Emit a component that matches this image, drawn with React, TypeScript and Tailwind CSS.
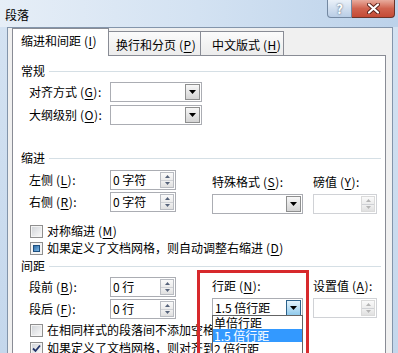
import React from "react";

const Key = ({ k }: { k: string }) => (
  <span className="ml-[3px] tracking-[0.5px]">
    (<span className="underline underline-offset-[2px]">{k}</span>)
  </span>
);

function Tri() {
  return (
    <svg width="7" height="4" viewBox="0 0 7 4">
      <path d="M0 0H7L3.5 4Z" fill="currentColor" />
    </svg>
  );
}

function Combo({ value = "", w, pressed = false }: { value?: string; w: string; pressed?: boolean }) {
  return (
    <div className={`${w} h-[20px] border border-[#abadb3] bg-white flex items-stretch shrink-0`}>
      <div className="flex-1 flex items-center pl-[2px] overflow-hidden whitespace-nowrap">{value}</div>
      <div
        className={
          pressed
            ? "w-[15px] m-px border border-[#2c628b] bg-gradient-to-b from-[#e5f4fc] to-[#8fcaec] flex items-center justify-center text-black"
            : "w-[15px] m-px border border-[#8e8f8f] bg-gradient-to-b from-[#f7f7f7] to-[#d4d4d4] flex items-center justify-center text-black"
        }
      >
        <Tri />
      </div>
    </div>
  );
}

function Spin({ value = "", w, disabled = false }: { value?: string; w: string; disabled?: boolean }) {
  return (
    <div
      className={`${w} h-[20px] border ${disabled ? "border-[#d0d2d6]" : "border-[#abadb3]"} bg-white flex items-stretch shrink-0`}
    >
      <div className="flex-1 flex items-center pl-[2px] whitespace-nowrap">{value}</div>
      <div
        className={`w-[14px] my-[1px] mr-[1px] flex flex-col border ${
          disabled ? "border-[#dadada] text-[#b4b4b4]" : "border-[#b9bcc2] text-[#56637a]"
        }`}
      >
        <div className="flex-1 flex items-center justify-center bg-gradient-to-b from-[#fafafa] to-[#ececec] border-b border-[#cfd1d5]">
          <svg width="5" height="3" viewBox="0 0 5 3">
            <path d="M0 3H5L2.5 0Z" fill="currentColor" />
          </svg>
        </div>
        <div className="flex-1 flex items-center justify-center bg-gradient-to-b from-[#f0f0f0] to-[#e0e0e0]">
          <svg width="5" height="3" viewBox="0 0 5 3">
            <path d="M0 0H5L2.5 3Z" fill="currentColor" />
          </svg>
        </div>
      </div>
    </div>
  );
}

function Check({ state }: { state: "off" | "ind" | "on" }) {
  return (
    <div className="w-[13px] h-[13px] border border-[#8f8f8f] bg-[#f4f4f4] p-[1px] flex shrink-0">
      {state === "ind" ? (
        <div className="flex-1 m-[1px] border border-[#1d4f7e] bg-gradient-to-br from-[#2f6ea8] to-[#7cb8e6]" />
      ) : (
        <div className="flex-1 bg-gradient-to-br from-[#d3d6da] to-[#f7f7f7] flex items-center justify-center">
          {state === "on" && (
            <svg width="9" height="9" viewBox="0 0 9 9">
              <path d="M1 4.5L3.5 7L8 1.5" stroke="#22346a" strokeWidth="1.8" fill="none" />
            </svg>
          )}
        </div>
      )}
    </div>
  );
}

function Section({ title }: { title: string }) {
  return (
    <div className="flex items-center h-[14px]">
      <span>{title}</span>
      <div className="flex-1 h-px bg-[#d5dfe5] ml-[4px] mr-[4px]" />
    </div>
  );
}

function CheckRow({ state, children }: { state: "off" | "ind" | "on"; children: React.ReactNode }) {
  return (
    <div className="flex items-center h-[14px] pl-[9px] whitespace-nowrap">
      <Check state={state} />
      <span className="ml-[4px]">{children}</span>
    </div>
  );
}

export default function App() {
  return (
    <div className="relative w-[398px] h-[353px] overflow-hidden bg-gradient-to-b from-[#d5e3f2] to-[#c4d7ec] font-['Noto_Sans_CJK_SC',sans-serif] text-[12px] leading-[14px] text-black">
      {/* title bar */}
      <div className="h-[27px] flex items-start bg-gradient-to-r from-[#e6eef7] via-[#d3e2f2] to-[#bcd2ea]">
        <div className="pl-[5px] pt-[8px]">段落</div>
        <div className="ml-auto mr-[3px] flex">
          <div className="w-[25px] h-[18px] border border-t-0 border-[#7388a1] rounded-bl-[4px] bg-gradient-to-b from-[#eaf1f9] to-[#b9cde5] flex items-center justify-center text-[13px] font-bold text-white [text-shadow:0_0_2px_#3a4a5c]">
            ?
          </div>
          <div className="w-[43px] h-[18px] border border-t-0 border-l-0 border-[#6a3329] rounded-br-[4px] bg-gradient-to-b from-[#e8ab9d] via-[#d0634f] to-[#c44a35] flex items-center justify-center">
            <svg width="13" height="11" viewBox="0 0 13 11">
              <path d="M2 1.5L11 9.5M11 1.5L2 9.5" stroke="#5b2119" strokeWidth="4" strokeLinecap="round" />
              <path d="M2 1.5L11 9.5M11 1.5L2 9.5" stroke="#ffffff" strokeWidth="2.2" strokeLinecap="round" />
            </svg>
          </div>
        </div>
      </div>

      {/* client area */}
      <div className="ml-[7px] mr-[5px] h-[330px] bg-[#f0f0f0] border-l border-t border-r border-[#8395ab] pl-[4px]">
        {/* tabs */}
        <div className="flex items-end h-[27px]">
          <div className="relative z-10 w-[97px] h-[28px] mb-[-1px] border border-b-0 border-[#898c95] bg-white pl-[8px] pb-[4px] flex items-center whitespace-nowrap">
            缩进和间距<Key k="I" />
          </div>
          <div className="w-[92px] h-[24px] border-t border-r border-[#898c95] bg-gradient-to-b from-[#fbfbfb] to-[#ececec] pl-[7px] pt-[3px] flex items-center whitespace-nowrap">
            换行和分页<Key k="P" />
          </div>
          <div className="w-[83px] h-[24px] border-t border-r border-[#898c95] bg-gradient-to-b from-[#fbfbfb] to-[#ececec] pl-[11px] pt-[3px] flex items-center whitespace-nowrap">
            中文版式<Key k="H" />
          </div>
        </div>

        {/* panel */}
        <div className="w-[374px] h-[320px] border border-[#898c95] bg-white pl-[8px]">
          <div className="mt-[8px]">
            <Section title="常规" />
          </div>
          <div className="mt-[4px] flex items-center h-[20px] pl-[8px]">
            <div className="w-[81px] whitespace-nowrap">
              对齐方式<Key k="G" />:
            </div>
            <Combo w="w-[92px]" />
          </div>
          <div className="mt-[3px] flex items-center h-[20px] pl-[8px]">
            <div className="w-[81px] whitespace-nowrap">
              大纲级别<Key k="O" />:
            </div>
            <Combo w="w-[92px]" />
          </div>

          <div className="mt-[26px]">
            <Section title="缩进" />
          </div>
          <div className="mt-[5px] flex pl-[8px]">
            <div className="w-[147px] flex flex-col gap-[2px]">
              <div className="flex items-center h-[20px]">
                <div className="w-[81px] whitespace-nowrap">
                  左侧<Key k="L" />:
                </div>
                <Spin w="w-[66px]" value="0 字符" />
              </div>
              <div className="flex items-center h-[20px]">
                <div className="w-[81px] whitespace-nowrap">
                  右侧<Key k="R" />:
                </div>
                <Spin w="w-[66px]" value="0 字符" />
              </div>
            </div>
            <div className="ml-[36px] w-[91px] flex flex-col">
              <div className="mt-[5px] whitespace-nowrap">
                特殊格式<Key k="S" />:
              </div>
              <div className="mt-[5px]">
                <Combo w="w-[91px]" />
              </div>
            </div>
            <div className="ml-[10px] w-[64px] flex flex-col">
              <div className="mt-[5px] whitespace-nowrap">
                磅值<Key k="Y" />:
              </div>
              <div className="mt-[5px]">
                <Spin w="w-[64px]" disabled />
              </div>
            </div>
          </div>

          <div className="mt-[10px]">
            <CheckRow state="off">
              对称缩进<Key k="M" />
            </CheckRow>
          </div>
          <div className="mt-[3px]">
            <CheckRow state="ind">
              如果定义了文档网格，则自动调整右缩进<Key k="D" />
            </CheckRow>
          </div>

          <div className="mt-[4px]">
            <Section title="间距" />
          </div>
          <div className="mt-[4px] flex pl-[8px]">
            <div className="w-[147px] flex flex-col gap-[2px]">
              <div className="flex items-center h-[20px]">
                <div className="w-[81px] whitespace-nowrap">
                  段前<Key k="B" />:
                </div>
                <Spin w="w-[66px]" value="0 行" />
              </div>
              <div className="flex items-center h-[20px]">
                <div className="w-[81px] whitespace-nowrap">
                  段后<Key k="F" />:
                </div>
                <Spin w="w-[66px]" value="0 行" />
              </div>
            </div>
            <div className="ml-[36px] w-[91px] flex flex-col">
              <div className="mt-[2px] whitespace-nowrap">
                行距<Key k="N" />:
              </div>
              <div className="mt-[5px]">
                <Combo w="w-[91px]" value="1.5 倍行距" pressed />
              </div>
            </div>
            <div className="ml-[10px] w-[64px] flex flex-col">
              <div className="mt-[2px] whitespace-nowrap">
                设置值<Key k="A" />:
              </div>
              <div className="mt-[5px]">
                <Spin w="w-[64px]" disabled />
              </div>
            </div>
          </div>

          <div className="mt-[4px]">
            <CheckRow state="off">
              在相同样式的段落间不添加空格<Key k="C" />
            </CheckRow>
          </div>
          <div className="mt-[4px]">
            <CheckRow state="on">
              如果定义了文档网格，则对齐到网格<Key k="W" />
            </CheckRow>
          </div>
        </div>
      </div>

      {/* open dropdown list */}
      <div className="absolute left-[212px] top-[315px] w-[91px] h-[60px] border border-[#646464] bg-white z-20">
        <div className="h-[13px] leading-[13px] pl-[1px] whitespace-nowrap">单倍行距</div>
        <div className="h-[13px] leading-[13px] pl-[1px] whitespace-nowrap bg-[#3399ff] text-white">1.5 倍行距</div>
        <div className="h-[13px] leading-[13px] pl-[1px] whitespace-nowrap">2 倍行距</div>
      </div>

      {/* red highlight rectangle */}
      <div className="absolute left-[197px] top-[270px] w-[112px] h-[100px] border-[3px] border-[#d7292c] pointer-events-none z-30" />
    </div>
  );
}
